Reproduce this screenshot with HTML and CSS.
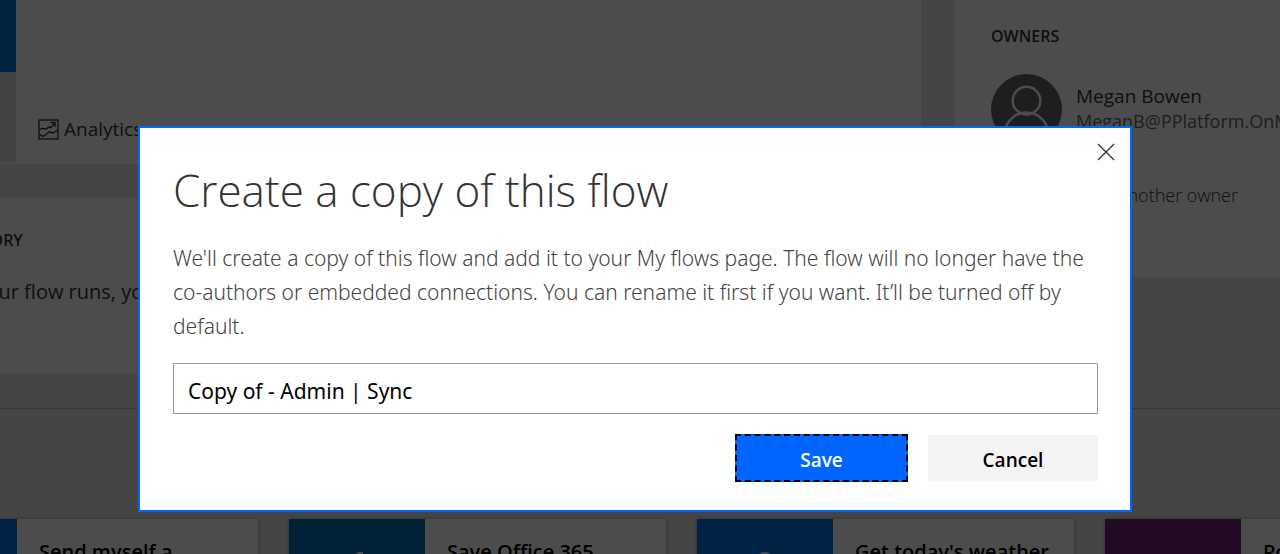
FILE: index.html
```
<!DOCTYPE html>
<html lang="en">
<head>
<meta charset="utf-8">
<title>Create a copy of this flow</title>
<link rel="stylesheet" href="styles.css">
</head>
<body>
<div class="page">
  <div class="details">
    <div class="main-column">
      <section class="card flow-card">
        <div class="flow-side">
          <div class="flow-tile"></div>
        </div>
        <a class="analytics" href="#">
          <svg width="21" height="21" viewBox="0 0 21 21" fill="none" stroke="currentColor" stroke-width="1.3"><rect x="1" y="1" width="19" height="19"/><path d="M1 11l3-1.500 4 .5 3-2 2 .500L17 3.500M12.500 3.500H17V8M1 15l3 2 2 0 5-4 4 1 5-3"/></svg>
          <span>Analytics</span>
        </a>
      </section>
      <section class="card history-card">
        <h2 class="section-title">RUN HISTORY</h2>
        <p class="history-text">When your flow runs, you</p>
      </section>
    </div>
    <aside class="card owners-card">
      <h2 class="section-title">OWNERS</h2>
      <div class="owner">
        <svg class="avatar" width="71" height="71" viewBox="0 0 72 72" fill="none"><circle cx="36" cy="36" r="36" fill="#666"/><g stroke="#fff" stroke-width="2.500"><circle cx="36" cy="27" r="14"/><path d="M14 61a22 22 0 0 1 44 0"/></g></svg>
        <div class="owner-info">
          <div class="owner-name">Megan Bowen</div>
          <div class="owner-mail">MeganB@PPlatform.OnMicrosoft.com</div>
        </div>
      </div>
      <a class="add-owner" href="#">Add another owner</a>
    </aside>
  </div>
  <div class="templates">
    <article class="card template"><div class="thumb blue"></div><h3 class="template-title">Send myself a</h3></article>
    <article class="card template"><div class="thumb teal"><svg width="20" height="20" viewBox="0 0 20 20" fill="#fff"><path d="M2 6L12 1h4v18H2z"/></svg></div><h3 class="template-title">Save Office 365</h3></article>
    <article class="card template"><div class="thumb blue"><svg width="20" height="20" viewBox="0 0 20 20" fill="#fff"><circle cx="10" cy="10" r="9"/></svg></div><h3 class="template-title">Get today's weather</h3></article>
    <article class="card template"><div class="thumb purple"></div><h3 class="template-title">Post messages</h3></article>
  </div>
</div>
<div class="scrim">
  <div class="modal" role="dialog" aria-modal="true" aria-labelledby="modal-title">
    <button class="close" type="button" aria-label="Close">
      <svg width="18" height="18" viewBox="0 0 18 18" fill="none" stroke="#333" stroke-width="1.300"><path d="M1 1l16 16M17 1L1 17"/></svg>
    </button>
    <h1 class="modal-title" id="modal-title">Create a copy of this flow</h1>
    <p class="modal-text">We'll create a copy of this flow and add it to your My flows page. The flow will no longer have the co-authors or embedded connections. You can rename it first if you want. It’ll be turned off by default.</p>
    <input class="name-input" type="text" aria-label="Flow name" value="Copy of - Admin | Sync">
    <div class="actions">
      <button class="button save" type="button">Save</button>
      <button class="button cancel" type="button">Cancel</button>
    </div>
  </div>
</div>
</body>
</html>
```
FILE: styles.css
```
* { box-sizing: border-box; }
body {
  margin: 0;
  font-family: "Open Sans", "Noto Sans", sans-serif;
  color: #333;
}
h1, h2, h3, p { margin: 0; }
a { color: inherit; text-decoration: none; }
svg { display: block; flex: none; }

.page {
  height: 100vh;
  overflow: hidden;
  background: #e6e6e6;
}
.details, .templates { margin-left: -119px; }
.card { background: #fff; }
.details {
  display: flex;
  align-items: flex-start;
  gap: 34px;
  padding-bottom: 34px;
  border-bottom: 1px solid #bbb;
}
.main-column {
  flex: 1;
  display: flex;
  flex-direction: column;
  gap: 34px;
}
.flow-card {
  display: flex;
  height: 164px;
  padding-bottom: 2px;
}
.flow-side { width: 135px; background: #e2e2e2; }
.flow-tile { height: 72px; background: #0078d4; }
.analytics {
  display: flex;
  align-items: center;
  align-self: flex-end;
  gap: 5px;
  padding: 0 0 19px 22px;
  font-size: 19px;
  line-height: 28px;
}
.history-card {
  height: 176px;
  padding: 30px 36px;
}
.section-title {
  font-size: 16px;
  line-height: 24px;
  font-weight: 600;
}
.history-text {
  margin-top: 24px;
  font-size: 20px;
  line-height: 32px;
}
.owners-card {
  width: 325px;
  height: 277px;
  padding: 24px 0 0 36px;
  overflow: hidden;
  white-space: nowrap;
}
.owner {
  display: flex;
  gap: 14px;
  margin-top: 26px;
}
.owner-info { padding-top: 9px; }
.owner-name { font-size: 19px; line-height: 26px; }
.owner-mail { font-size: 18px; line-height: 24px; color: #666; }
.add-owner {
  display: block;
  margin: 36px 0 0 90px;
  font-size: 18px;
  line-height: 28px;
  font-weight: 300;
}
.templates {
  display: grid;
  grid-template-columns: repeat(4, 377px);
  gap: 31px;
  padding-top: 110px;
}
.template {
  display: flex;
  height: 160px;
  box-shadow: 0 0 4px rgba(0, 0, 0, 0.3);
}
.thumb {
  display: flex;
  flex: none;
  justify-content: center;
  width: 136px;
  padding-top: 32px;
}
.blue { background: #0077e6; }
.teal { background: #0072b8; }
.purple { background: #742774; }
.template-title {
  padding: 20px 22px;
  font-size: 20px;
  line-height: 26px;
  font-weight: 600;
  color: #000;
}

.scrim {
  position: fixed;
  inset: 0;
  display: flex;
  align-items: flex-start;
  padding: 126px 148px 0 138px;
  background: rgba(0, 0, 0, 0.7);
}
.modal {
  position: relative;
  flex: 1;
  padding: 32px 32px 28px 33px;
  border: 2px solid #06f;
  background: #fff;
}
.close {
  position: absolute;
  top: 15px;
  right: 15px;
  padding: 0;
  border: 0;
  background: none;
}
.modal-title {
  font-size: 44px;
  line-height: 60px;
  font-weight: 300;
}
.modal-text {
  margin-top: 21px;
  font-family: "Noto Sans", "Open Sans", sans-serif;
  font-size: 21px;
  line-height: 34px;
  font-weight: 300;
  color: #444;
}
.name-input {
  display: block;
  width: 100%;
  height: 51px;
  margin-top: 20px;
  padding: 4px 14px 0;
  border: 1px solid #999;
  background: #fff;
  font: 21px "Noto Sans", "Open Sans", sans-serif;
  color: #000;
}
.actions {
  display: flex;
  justify-content: flex-end;
  gap: 20px;
  margin-top: 20px;
}
.button {
  width: 170px;
  height: 48px;
  padding: 4px 0 0;
  border: 0;
  font: 600 19px "Open Sans", "Noto Sans", sans-serif;
}
.save {
  width: 173px;
  border: 2px dashed #000;
  background: #06f;
  color: #fff;
}
.cancel {
  height: 46px;
  margin: 1px 0;
  background: #f3f3f3;
  color: #000;
}
```
